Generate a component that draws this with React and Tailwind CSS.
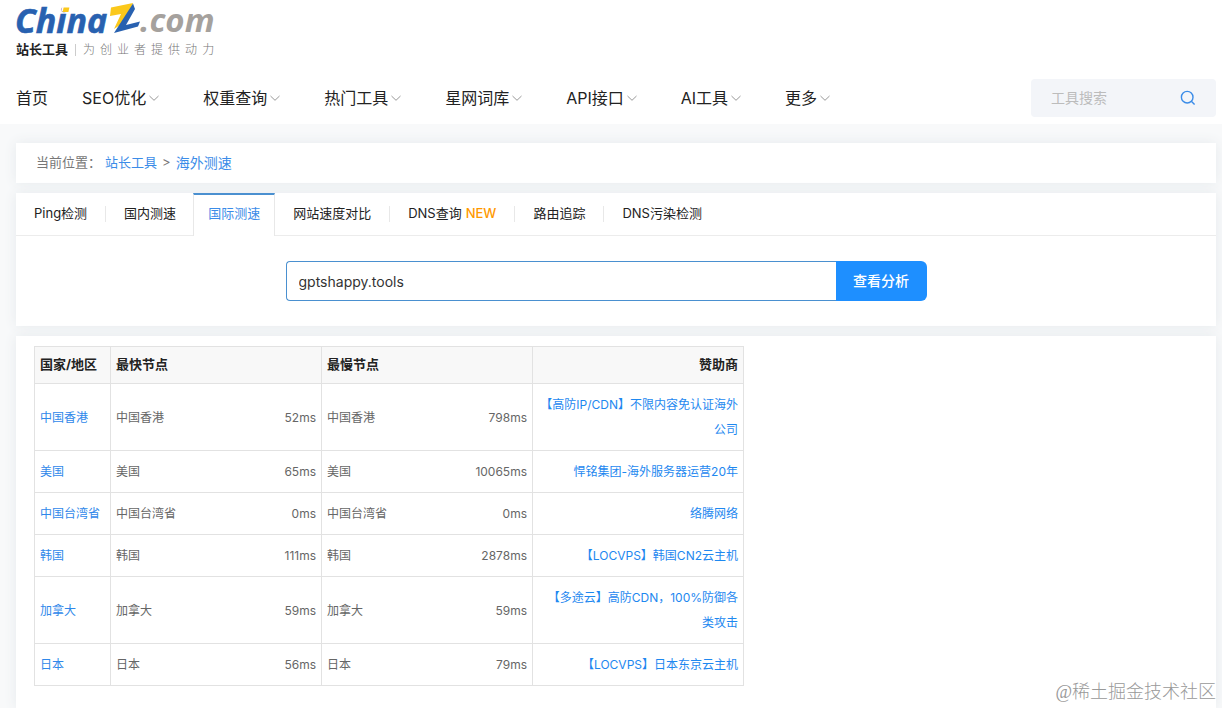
import React, { useState } from "react";

const navItems = ["首页", "SEO优化", "权重查询", "热门工具", "星网词库", "API接口", "AI工具", "更多"];

const tabs = [
  { label: "Ping检测" },
  { label: "国内测速" },
  { label: "国际测速", active: true },
  { label: "网站速度对比" },
  { label: "DNS查询", isNew: true },
  { label: "路由追踪" },
  { label: "DNS污染检测" },
];

const rows = [
  { region: "中国香港", fast: "52ms", slow: "798ms", sponsor: "【高防IP/CDN】不限内容免认证海外公司" },
  { region: "美国", fast: "65ms", slow: "10065ms", sponsor: "悍铭集团-海外服务器运营20年" },
  { region: "中国台湾省", fast: "0ms", slow: "0ms", sponsor: "络腾网络" },
  { region: "韩国", fast: "111ms", slow: "2878ms", sponsor: "【LOCVPS】韩国CN2云主机" },
  { region: "加拿大", fast: "59ms", slow: "59ms", sponsor: "【多途云】高防CDN，100%防御各类攻击" },
  { region: "日本", fast: "56ms", slow: "79ms", sponsor: "【LOCVPS】日本东京云主机" },
];

const Chevron = () => (
  <svg className="ml-0.5 h-3 w-3" viewBox="0 0 12 12" fill="none" stroke="#999" strokeWidth="1">
    <path d="M1.5 4 L6 8.3 L10.5 4" />
  </svg>
);

const Logo = () => (
  <a href="#" className="block w-fit">
    <svg className="block h-10 w-[210px] overflow-visible" viewBox="0 0 210 40" role="img" aria-label="ChinaZ.com">
      <g fontFamily="'Open Sans', sans-serif" fontStyle="italic" fontWeight="700">
        <text x="-1" y="33" fontSize="34" fill="#2861b0" stroke="#2861b0" strokeWidth="0.6">China</text>
        <text x="124" y="32" fontSize="33" fill="#a5a19d">.com</text>
      </g>
      {/* yellow dot of the i */}
      <path d="M46.5 5.5 h8.5 l-1.3 6 h-8.5z" fill="#fff" />
      <path d="M47.6 7.5 h5.8 l-1 4.5 h-5.8z" fill="#fbc81b" />
      <path d="M95 7.5 L117 3 L115 8 L104 25 L98 29 L105 14 L94 16z" fill="#fbc81b" />
      <path d="M117 3.5 L119 9 L110 25 L124 21.5 L122 26.5 L98 33z" fill="#2861b0" />
    </svg>
    <span className="flex h-5 items-center text-xs">
      <span className="text-[13px] font-bold text-[#222]">站长工具</span>
      <span className="mx-[7px] h-3 w-px bg-[#ccc]" />
      <span className="flex gap-[5px] font-light text-[#777]">
        {"为创业者提供动力".split("").map((c) => (
          <span key={c}>{c}</span>
        ))}
      </span>
    </span>
  </a>
);

const Header = () => (
  <header className="bg-white px-4 pb-[7px]">
    <Logo />
    <div className="mt-[19px] flex items-center justify-between -mr-2.5">
      <nav className="flex items-center text-base text-[#222]">
        {navItems.map((item, i) => (
          <a
            key={item}
            href="#"
            className={i === 0 ? "mr-[34px]" : "mr-[43px] flex items-center"}
          >
            {item}
            {i > 0 && <Chevron />}
          </a>
        ))}
      </nav>
      <form className="flex h-[38px] w-[185px] items-center rounded bg-[#f3f5f9] pl-5 pr-5">
        <input
          type="text"
          aria-label="工具搜索"
          placeholder="工具搜索"
          className="min-w-0 flex-1 bg-transparent text-sm outline-none placeholder:text-[#bcbcbc]"
        />
        <button type="button" aria-label="搜索">
          <svg className="h-4 w-4" viewBox="0 0 16 16" fill="none" stroke="#3b8ce8" strokeWidth="1.4">
            <circle cx="7.2" cy="7.2" r="5.8" />
            <path d="M11.3 11.3 L14.6 14.6" />
          </svg>
        </button>
      </form>
    </div>
  </header>
);

const Tabs = () => (
  <nav className="flex h-[43px] text-[13px] text-[#222]">
    {tabs.map((tab, i) => {
      if (tab.active) {
        return (
          <a
            key={tab.label}
            href="#"
            className="flex items-center border-x border-t-2 border-x-[#e8e8e8] border-t-[#4a90d0] px-3.5 pb-1 text-[#3b8ce8]"
          >
            {tab.label}
          </a>
        );
      }
      const divider = i !== 1 && i < tabs.length - 1;
      return (
        <div key={tab.label} className="flex items-center border-b border-[#ececec]">
          <a href="#" className={i === 1 ? "pr-[17px] pl-[18px]" : "px-[18px]"}>
            {tab.label}
            {tab.isNew && <span className="ml-1 font-medium text-[#f90]">NEW</span>}
          </a>
          {divider && <span className="h-4 w-px bg-[#e8e8e8]" />}
        </div>
      );
    })}
    <div className="flex-1 border-b border-[#ececec]" />
  </nav>
);

const NodeCell = ({ name, time }) => (
  <td className="border border-[#e2e2e2] px-[5px] py-2">
    <div className="flex justify-between">
      <span>{name}</span>
      <span>{time}</span>
    </div>
  </td>
);

const ResultTable = () => (
  <table className="w-[710px] table-fixed border-collapse text-xs leading-[25px] text-[#666]">
    <colgroup>
      <col className="w-[76px]" />
      <col />
      <col />
      <col />
    </colgroup>
    <thead>
      <tr className="bg-[#f8f8f8] text-left text-[13px] leading-6 text-[#222]">
        <th className="border border-[#e2e2e2] px-[5px] pt-[5px] pb-[7px] font-bold whitespace-nowrap">国家/地区</th>
        <th className="border border-[#e2e2e2] px-[5px] pt-[5px] pb-[7px] font-bold">最快节点</th>
        <th className="border border-[#e2e2e2] px-[5px] pt-[5px] pb-[7px] font-bold">最慢节点</th>
        <th className="border border-[#e2e2e2] px-[5px] pt-[5px] pb-[7px] text-right font-bold">赞助商</th>
      </tr>
    </thead>
    <tbody>
      {rows.map((row) => (
        <tr key={row.region}>
          <td className="border border-[#e2e2e2] px-[5px] py-2 whitespace-nowrap">
            <a href="#" className="text-[#2f88ea]">{row.region}</a>
          </td>
          <NodeCell name={row.region} time={row.fast} />
          <NodeCell name={row.region} time={row.slow} />
          <td className="border border-[#e2e2e2] px-[5px] py-2 text-right">
            <a href="#" className="text-[#1e88f0]">{row.sponsor}</a>
          </td>
        </tr>
      ))}
    </tbody>
  </table>
);

const App = () => {
  const [host, setHost] = useState("gptshappy.tools");

  return (
    <div className="flex min-h-screen flex-col bg-[#f8f9fa] font-['Inter','Noto_Sans_CJK_SC',sans-serif]">
      <Header />
      <main className="flex flex-1 flex-col gap-2.5 pt-[19px] pr-1.5 pl-4">
        <div className="flex h-10 items-center bg-white px-5 text-[13px] text-[#777] shadow-[0_0_12px_#e6eaed]">
          <span>当前位置：</span>
          <a href="#" className="ml-1 text-[#3b8ce8]">站长工具</a>
          <span className="mx-[5px]">&gt;</span>
          <a href="#" className="text-sm text-[#3b8ce8]">海外测速</a>
        </div>

        <section className="bg-white shadow-[0_0_12px_#e6eaed]">
          <Tabs />
          <form className="flex justify-center py-[25px] pr-5">
            <input
              type="text"
              aria-label="域名"
              value={host}
              onChange={(e) => setHost(e.target.value)}
              className="h-10 w-[550px] rounded-l border border-r-0 border-[#4a90d0] px-3 text-sm text-[#333] outline-none"
            />
            <button type="button" className="h-10 w-[91px] rounded-r-md bg-[#1e8fff] text-sm font-medium text-white">
              查看分析
            </button>
          </form>
        </section>

        <section className="flex-1 bg-white px-[18px] pt-2.5 pb-5 shadow-[0_0_12px_#e6eaed]">
          <ResultTable />
        </section>
      </main>
      <div className="pointer-events-none absolute right-1.5 bottom-1 font-['Liberation_Serif','Noto_Sans_CJK_SC',serif] text-lg leading-6 font-light text-[#999]">
        @稀土掘金技术社区
      </div>
    </div>
  );
};

export default App;
